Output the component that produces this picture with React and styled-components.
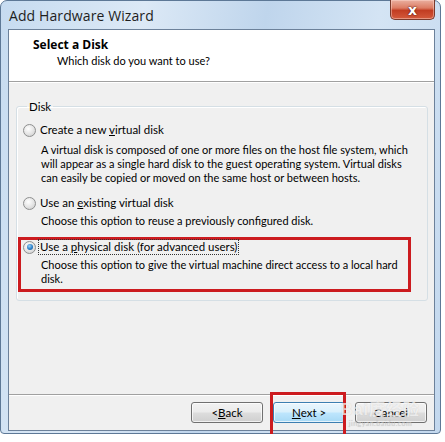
import React from 'react';
import styled, { createGlobalStyle } from 'styled-components';

const GlobalStyle = createGlobalStyle`
  body {
    margin: 0;
    background: #ffffff;
    font-family: Lato, "Open Sans", "Liberation Sans", sans-serif;
  }
`;

const Window = styled.div`
  position: relative;
  width: 441px;
  height: 434px;
  box-sizing: border-box;
  padding: 0 5px 2px 7px;
  display: flex;
  flex-direction: column;
  border: 1px solid #5d7896;
  border-radius: 7px 7px 4px 4px;
  background: linear-gradient(100deg, #c6dbf0 0%, #dce9f6 28%, #bfd5ec 52%, #d4e4f4 74%, #c3d8ee 100%);
`;

const TitleBar = styled.div`
  height: 28px;
  display: flex;
  align-items: flex-start;
`;

const Title = styled.span`
  margin-top: 5px;
  margin-left: 1px;
  font-family: "Open Sans", sans-serif;
  font-size: 14px;
  color: #1e1e1e;
  letter-spacing: 0.1px;
`;

const CloseButton = styled.div`
  margin-left: auto;
  margin-top: -1px;
  width: 45px;
  height: 20px;
  box-sizing: border-box;
  border: 1px solid #7a3a2c;
  border-top: none;
  border-radius: 0 0 5px 5px;
  background: linear-gradient(#eab0a0 0%, #dc7c63 42%, #c23d22 55%, #d45a3c 100%);
  box-shadow: inset 0 0 0 1px rgba(255, 220, 210, 0.45);
  display: flex;
  align-items: center;
  justify-content: center;
  color: #ffffff;
  font-family: "DejaVu Sans", sans-serif;
  font-weight: bold;
  font-size: 14px;
  line-height: 1;
  text-shadow: 0 0 2px #5a1a10, 0 0 1px #5a1a10;
`;

const Client = styled.div`
  flex: 1;
  display: flex;
  flex-direction: column;
  border: 1px solid #6c819a;
  background: #f0f0f0;
`;

const Header = styled.div`
  height: 52px;
  box-sizing: border-box;
  padding: 7px 0 0 24px;
  background: #ffffff;
  border-bottom: 1px solid #a0a0a0;
  box-shadow: 0 1px 0 #ffffff;
`;

const HeaderTitle = styled.div`
  font-family: "Open Sans", sans-serif;
  font-size: 12px;
  font-weight: bold;
  color: #000000;
  line-height: 16px;
`;

const HeaderSub = styled.div`
  padding-left: 24px;
  font-size: 11px;
  color: #000000;
  line-height: 16px;
`;

const Body = styled.div`
  flex: 1;
  padding: 18px 6px 0 7px;
`;

const GroupBox = styled.fieldset`
  margin: 0;
  padding: 4px 10px 8px 6px;
  border: 1px solid #d5dfe5;
  border-radius: 3px;
  box-shadow: inset 1px 1px 0 #ffffff;
`;

const Legend = styled.legend`
  padding: 0 2px;
  margin-left: 4px;
  font-size: 11.5px;
  color: #000000;
`;

const Option = styled.div`
  margin-top: ${(p) => p.$gap}px;
  margin-left: ${(p) => (p.$marked ? -5 : 0)}px;
  margin-right: ${(p) => (p.$marked ? 6 : 0)}px;
  padding: ${(p) => (p.$marked ? '0 2px 3px 2px' : '0')};
  border: ${(p) => (p.$marked ? '3px solid #cc1b1f' : 'none')};
`;

const OptionLabel = styled.div`
  display: flex;
  align-items: center;
  gap: 3px;
  font-size: 11.5px;
  line-height: 16px;
  color: #000000;
`;

const LabelText = styled.span`
  padding: 0 1px;
  line-height: 14px;
  outline: ${(p) => (p.$focused ? '1px dotted #333' : 'none')};
`;

const Radio = styled.span`
  width: 11px;
  height: 11px;
  border-radius: 50%;
  border: 1px solid #8e8f8f;
  background: radial-gradient(circle at 40% 35%, #ffffff 0%, #e6e6e6 50%, #c8c8c8 100%);
  display: flex;
  align-items: center;
  justify-content: center;
  flex: none;
`;

const RadioDot = styled.span`
  width: 6px;
  height: 6px;
  border-radius: 50%;
  background: radial-gradient(circle at 40% 35%, #9bd3f7 0%, #2a7fc9 55%, #134f8a 100%);
`;

const Description = styled.div`
  margin-top: ${(p) => p.$top}px;
  padding-left: 18px;
  font-size: 11px;
  line-height: 14px;
  white-space: nowrap;
  color: #000000;
`;

const Footer = styled.div`
  height: 35px;
  border-top: 1px solid #a0a0a0;
  box-shadow: inset 0 1px 0 #ffffff;
  display: flex;
  align-items: center;
  justify-content: flex-end;
  gap: 10px;
  padding: 0 7px 0 0;
  position: relative;
`;

const Button = styled.div`
  position: relative;
  width: 70px;
  height: 19px;
  border-radius: 3px;
  border: 1px solid ${(p) => (p.$default ? '#3c7fb1' : '#707070')};
  background: ${(p) =>
    p.$default
      ? 'linear-gradient(#eaf6fd 0%, #d9f0fc 48%, #bee6fd 52%, #a7d9f5 100%)'
      : 'linear-gradient(#f2f2f2 0%, #ebebeb 48%, #dddddd 52%, #cfcfcf 100%)'};
  box-shadow: inset 0 0 0 1px rgba(255, 255, 255, 0.7);
  display: flex;
  align-items: center;
  justify-content: center;
  font-size: 11.5px;
  color: #000000;
`;

const Highlight = styled.div`
  position: absolute;
  left: -4px;
  top: -11px;
  width: 70px;
  height: 40px;
  border: 3px solid #cc1b1f;
  pointer-events: none;
`;

const Watermark = styled.div`
  position: absolute;
  right: 14px;
  bottom: 3px;
  display: flex;
  flex-direction: column;
  align-items: center;
  color: rgba(255, 255, 255, 0.7);
  text-shadow: 0 0 1px rgba(120, 120, 120, 0.3);
  pointer-events: none;
`;

const WatermarkLogo = styled.span`
  font-family: "Liberation Sans", "Noto Sans CJK SC", sans-serif;
  font-size: 16px;
  font-weight: bold;
  letter-spacing: 1px;
  line-height: 18px;
`;

const WatermarkUrl = styled.span`
  font-size: 7px;
  line-height: 8px;
  letter-spacing: 0.5px;
  color: rgba(205, 205, 205, 0.75);
`;

const Key = styled.u`
  text-decoration: underline;
`;

const App = () => (
  <>
    <GlobalStyle />
    <Window>
      <TitleBar>
        <Title>Add Hardware Wizard</Title>
        <CloseButton>x</CloseButton>
      </TitleBar>
      <Client>
        <Header>
          <HeaderTitle>Select a Disk</HeaderTitle>
          <HeaderSub>Which disk do you want to use?</HeaderSub>
        </Header>
        <Body>
          <GroupBox>
            <Legend>Disk</Legend>
            <Option $gap={6}>
              <OptionLabel>
                <Radio />
                <LabelText>
                  Create a new <Key>v</Key>irtual disk
                </LabelText>
              </OptionLabel>
              <Description $top={6}>
                A virtual disk is composed of one or more files on the host file system, which
                <br />
                will appear as a single hard disk to the guest operating system. Virtual disks
                <br />
                can easily be copied or moved on the same host or between hosts.
              </Description>
            </Option>
            <Option $gap={11}>
              <OptionLabel>
                <Radio />
                <LabelText>
                  Use an <Key>e</Key>xisting virtual disk
                </LabelText>
              </OptionLabel>
              <Description $top={4}>Choose this option to reuse a previously configured disk.</Description>
            </Option>
            <Option $gap={9} $marked>
              <OptionLabel>
                <Radio>
                  <RadioDot />
                </Radio>
                <LabelText $focused>
                  Use a <Key>p</Key>hysical disk (for advanced users)
                </LabelText>
              </OptionLabel>
              <Description $top={4}>
                Choose this option to give the virtual machine direct access to a local hard
                <br />
                disk.
              </Description>
            </Option>
          </GroupBox>
        </Body>
        <Footer>
          <Button>
            &lt; <Key>B</Key>ack
          </Button>
          <Button $default>
            <Key>N</Key>ext &gt;
            <Highlight />
          </Button>
          <Button>Cancel</Button>
          <Watermark>
            <WatermarkLogo>Bai度经验</WatermarkLogo>
            <WatermarkUrl>jingyan.baidu.com</WatermarkUrl>
          </Watermark>
        </Footer>
      </Client>
    </Window>
  </>
);

export default App;
